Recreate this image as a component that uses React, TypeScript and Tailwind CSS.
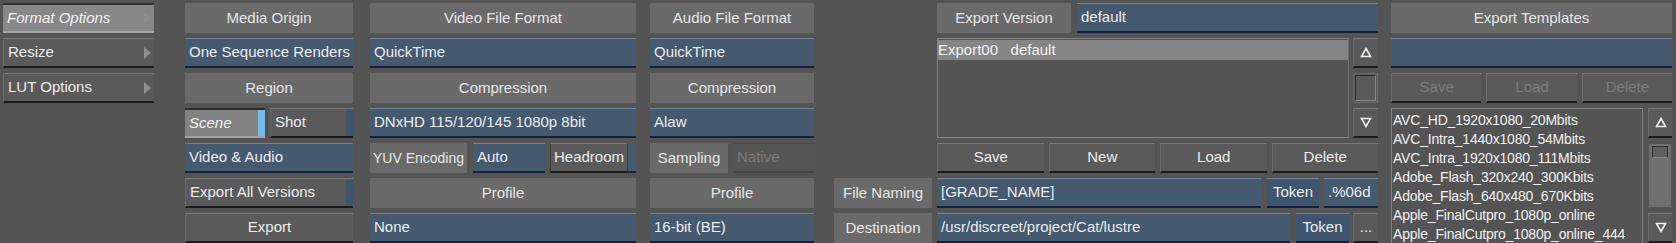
import type { ReactNode } from 'react';

const FONT = "font-['Liberation_Sans',Arial,sans-serif]";

function Label({ children, className = '' }: { children: ReactNode; className?: string }) {
  return (
    <div className={`h-[30px] bg-[#6a6a6a] flex items-center justify-center text-[#e6e6e6] whitespace-nowrap ${className}`}>
      {children}
    </div>
  );
}

function Field({ children, className = '', center = false }: { children?: ReactNode; className?: string; center?: boolean }) {
  return (
    <div
      className={`h-[30px] bg-[#45596f] border-t border-t-[#6f849c] border-b-2 border-b-[#16203a] flex items-center ${
        center ? 'justify-center' : 'pl-[4px]'
      } text-[#ececec] whitespace-nowrap overflow-hidden ${className}`}
    >
      {children}
    </div>
  );
}

function Btn({
  children,
  className = '',
  disabled = false,
  align = 'center',
  stripe,
}: {
  children?: ReactNode;
  className?: string;
  disabled?: boolean;
  align?: 'center' | 'left';
  stripe?: string;
}) {
  return (
    <div
      className={`h-[30px] flex bg-[#5a5a5a] border-t border-t-[#7a7a7a] border-l border-l-[#6a6a6a] border-b-2 border-b-[#1c1c1c] ${
        disabled ? 'text-[#7c7c7c]' : 'text-[#ececec]'
      } ${className}`}
    >
      <div className={`flex-1 flex items-center ${align === 'center' ? 'justify-center' : 'pl-[4px]'} whitespace-nowrap`}>
        {children}
      </div>
      {stripe && <div className={`w-[7px] ${stripe}`} />}
    </div>
  );
}

function Arrow() {
  return (
    <svg width="7" height="12" viewBox="0 0 7 12" className="mr-[3px]">
      <path d="M0 0 L7 6 L0 12 Z" fill="#8e8e8e" />
    </svg>
  );
}

function Tri({ up }: { up?: boolean }) {
  return (
    <svg width="12" height="11" viewBox="0 0 12 11">
      {up ? (
        <path d="M6 1.5 L10.5 9.5 L1.5 9.5 Z" fill="none" stroke="#f0f0f0" strokeWidth="1.6" />
      ) : (
        <path d="M1.5 1.5 L10.5 1.5 L6 9.5 Z" fill="none" stroke="#f0f0f0" strokeWidth="1.6" />
      )}
    </svg>
  );
}

const templates = [
  'AVC_HD_1920x1080_20Mbits',
  'AVC_Intra_1440x1080_54Mbits',
  'AVC_Intra_1920x1080_111Mbits',
  'Adobe_Flash_320x240_300Kbits',
  'Adobe_Flash_640x480_670Kbits',
  'Apple_FinalCutpro_1080p_online',
  'Apple_FinalCutpro_1080p_online_444',
];

export default function App() {
  return (
    <div className={`w-[1676px] h-[243px] overflow-hidden bg-[#545454] flex pt-[3px] pl-[3px] text-[15px] ${FONT}`}>
      {/* side menu */}
      <div className="w-[151px] flex flex-col gap-[5px]">
        <div className="h-[30px] flex items-center justify-between bg-[#878787] border-t-2 border-t-[#303030] border-b-2 border-b-[#a6a6a6] pl-[4px] text-[#f2f2f2] italic">
          Format Options
          <Arrow />
        </div>
        <div className="h-[30px] flex items-center justify-between bg-[#5a5a5a] border-t border-t-[#7a7a7a] border-l border-l-[#6a6a6a] border-b-2 border-b-[#1c1c1c] pl-[4px] text-[#ececec]">
          Resize
          <Arrow />
        </div>
        <div className="h-[30px] flex items-center justify-between bg-[#5a5a5a] border-t border-t-[#7a7a7a] border-l border-l-[#6a6a6a] border-b-2 border-b-[#1c1c1c] pl-[4px] text-[#ececec]">
          LUT Options
          <Arrow />
        </div>
      </div>

      {/* media origin */}
      <div className="w-[168px] ml-[31px] flex flex-col gap-[5px]">
        <Label>Media Origin</Label>
        <Field>One Sequence Renders</Field>
        <Label>Region</Label>
        <div className="h-[30px] flex gap-[5px]">
          <div className="w-[80px] flex bg-[#828282] border-t-2 border-t-[#2e2e2e] border-b-2 border-b-[#a4a4a4] text-[#f2f2f2] italic">
            <div className="flex-1 flex items-center pl-[4px]">Scene</div>
            <div className="w-[7px] bg-[#74b9e9]" />
          </div>
          <Btn className="flex-1" align="left" stripe="bg-[#3f546d]">
            Shot
          </Btn>
        </div>
        <Field>Video &amp; Audio</Field>
        <Btn align="left" stripe="bg-[#3f546d]">
          Export All Versions
        </Btn>
        <Btn>Export</Btn>
      </div>

      {/* video */}
      <div className="w-[266px] ml-[17px] flex flex-col gap-[5px]">
        <Label>Video File Format</Label>
        <Field>QuickTime</Field>
        <Label>Compression</Label>
        <Field>DNxHD 115/120/145 1080p 8bit</Field>
        <div className="h-[30px] flex">
          <Label className="w-[97px] !justify-start pl-[3px] text-[14px]">YUV Encoding</Label>
          <Field className="w-[72px] ml-[6px]">Auto</Field>
          <div className="flex-1 ml-[5px] flex">
            <div className="flex-1 h-[30px] flex items-center justify-center bg-[#5a5a5a] border border-[#3a3a3a] border-t-[#7a7a7a] border-b-2 border-b-[#1c1c1c] text-[#ececec]">
              Headroom
            </div>
            <div className="w-[8px] bg-[#45596f] border-b-2 border-b-[#16203a]" />
          </div>
        </div>
        <Label>Profile</Label>
        <Field>None</Field>
      </div>

      {/* audio */}
      <div className="w-[164px] ml-[14px] flex flex-col gap-[5px]">
        <Label>Audio File Format</Label>
        <Field>QuickTime</Field>
        <Label>Compression</Label>
        <Field>Alaw</Field>
        <div className="h-[30px] flex gap-[5px]">
          <Label className="w-[78px]">Sampling</Label>
          <div className="flex-1 h-[30px] flex items-center pl-[4px] bg-[#555] border-t border-t-[#4a4a4a] border-b-2 border-b-[#444] text-[#7a7a7a]">
            Native
          </div>
        </div>
        <Label>Profile</Label>
        <Field>16-bit (BE)</Field>
      </div>

      {/* export version */}
      <div className="w-[544px] ml-[20px] flex flex-col gap-[5px]">
        <div className="h-[30px] flex pl-[103px] gap-[6px]">
          <Label className="w-[134px]">Export Version</Label>
          <Field className="flex-1">default</Field>
        </div>
        <div className="h-[100px] flex pl-[103px] gap-[4px]">
          <div className="flex-1 border border-[#848484] border-r-[#6e6e6e] pt-[1px]">
            <div className="h-[20px] bg-[#858585] flex items-center text-[#f2f2f2] whitespace-pre">
              Export00   default
            </div>
          </div>
          <div className="w-[25px] flex flex-col gap-[5px]">
            <Btn className="h-[30px]">
              <Tri up />
            </Btn>
            <div className="h-[30px] bg-[#5a5a5a] border border-[#6a6a6a] flex p-[1px]">
              <div className="flex-1 border border-[#2c2c2c] border-b-[#8a8a8a] border-r-[#8a8a8a]" />
            </div>
            <Btn className="h-[30px]">
              <Tri />
            </Btn>
          </div>
        </div>
        <div className="h-[30px] flex pl-[103px] gap-[5px]">
          <Btn className="flex-1">Save</Btn>
          <Btn className="flex-1">New</Btn>
          <Btn className="flex-1">Load</Btn>
          <Btn className="flex-1">Delete</Btn>
        </div>
        <div className="h-[30px] flex">
          <Label className="w-[98px]">File Naming</Label>
          <Field className="w-[324px] ml-[5px]">[GRADE_NAME]</Field>
          <Field className="w-[52px] ml-[6px] !bg-[#3f546e]" center>
            Token
          </Field>
          <Field className="flex-1 ml-[5px]">.%06d</Field>
        </div>
        <div className="h-[30px] flex">
          <Label className="w-[98px]">Destination</Label>
          <Field className="w-[353px] ml-[5px]">/usr/discreet/project/Cat/lustre</Field>
          <Field className="w-[53px] ml-[6px] !bg-[#3f546e]" center>
            Token
          </Field>
          <Btn className="flex-1 ml-[4px]">...</Btn>
        </div>
      </div>

      {/* templates */}
      <div className="w-[281px] ml-[13px] flex flex-col gap-[5px]">
        <Label>Export Templates</Label>
        <Field />
        <div className="h-[30px] flex gap-[5px]">
          <Btn className="flex-1" disabled>
            Save
          </Btn>
          <Btn className="flex-1" disabled>
            Load
          </Btn>
          <Btn className="flex-1" disabled>
            Delete
          </Btn>
        </div>
        <div className="flex-1 flex gap-[5px] min-h-0">
          <div className="flex-1 border border-[#848484] border-b-0 pt-[2px] overflow-hidden">
            {templates.map((t) => (
              <div
                key={t}
                className="h-[19px] leading-[19px] pl-[1px] text-[14px] tracking-[-0.2px] text-[#f0f0f0] whitespace-nowrap"
              >
                {t}
              </div>
            ))}
          </div>
          <div className="w-[24px] flex flex-col">
            <Btn className="h-[30px]">
              <Tri up />
            </Btn>
            <div className="flex-1 mt-[5px] mb-[5px] bg-[#707070] border border-[#555] p-[2px]">
              <div className="h-[12px] mx-[1px] bg-[#606060] border border-[#333] border-b-[#8a8a8a]" />
            </div>
            <Btn className="h-[30px]">
              <Tri />
            </Btn>
          </div>
        </div>
      </div>
    </div>
  );
}
